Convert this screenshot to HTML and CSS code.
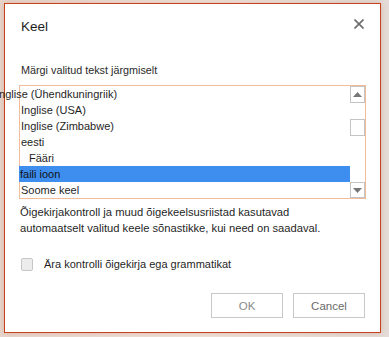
FILE: index.html
```html
<!DOCTYPE html>
<html lang="et">
<head>
<meta charset="utf-8">
<title>Keel</title>
<link rel="stylesheet" href="styles.css">
</head>
<body>
<div class="dialog">
  <div class="header">
    <div class="title">Keel</div>
    <svg class="close" width="10" height="10" viewBox="0 0 10 10"><path d="M0.5 0.5 L9.5 9.5 M9.5 0.5 L0.5 9.5" stroke="#6b6b6b" stroke-width="1.6" fill="none"/></svg>
  </div>
  <div class="label">Märgi valitud tekst järgmiselt</div>
  <div class="list">
    <div class="items">
      <div class="item overflow">Inglise (Ühendkuningriik)</div>
      <div class="item">Inglise (USA)</div>
      <div class="item">Inglise (Zimbabwe)</div>
      <div class="item">eesti</div>
      <div class="item indent">Fääri</div>
      <div class="item selected">faili ioon</div>
      <div class="item">Soome keel</div>
    </div>
    <div class="scrollbar">
      <div class="sbtn up"><svg width="9" height="5" viewBox="0 0 9 5"><path d="M0 5 L4.5 0 L9 5 Z" fill="#777"/></svg></div>
      <div class="thumb"></div>
      <div class="sbtn down"><svg width="9" height="5" viewBox="0 0 9 5"><path d="M0 0 L4.5 5 L9 0 Z" fill="#777"/></svg></div>
    </div>
  </div>
  <p class="desc">Õigekirjakontroll ja muud õigekeelsusriistad kasutavad automaatselt valitud keele sõnastikke, kui need on saadaval.</p>
  <label class="check"><span class="box"></span>Ära kontrolli õigekirja ega grammatikat</label>
  <div class="footer">
    <button class="btn ok">OK</button>
    <button class="btn">Cancel</button>
  </div>
</div>
</body>
</html>
```
FILE: styles.css
```css
html, body {
  margin: 0;
  padding: 0;
}
body {
  width: 389px;
  height: 337px;
  overflow: hidden;
  background: linear-gradient(90deg, #e6d6ce 0%, #efe3dc 50%, #e3dcd8 100%);
  font-family: "Liberation Sans", Arial, sans-serif;
  font-size: 11px;
  color: #262626;
}
.dialog {
  box-sizing: border-box;
  width: 377px;
  height: 330px;
  margin: 3px 0 0 4px;
  background: #fff;
  border: 1px solid #c4421e;
  box-shadow: 0 0 6px rgba(200, 110, 70, 0.35);
  padding: 0 14px 14px 14px;
  display: flex;
  flex-direction: column;
}
.header {
  display: flex;
  justify-content: space-between;
  align-items: flex-start;
  padding-top: 15px;
  height: 40px;
  box-sizing: border-box;
}
.title {
  font-size: 13.5px;
  line-height: 16px;
  padding-left: 2px;
  color: #1e1e1e;
}
.close {
  margin-top: 0px;
  margin-right: 2px;
}
.label {
  margin-top: 18px;
  line-height: 16px;
  padding-left: 2px;
  font-size: 10.8px;
  color: #2a2a2a;
}
.list {
  margin-top: 7px;
  box-sizing: border-box;
  height: 114px;
  border: 1px solid #f0bc9c;
  display: grid;
  grid-template-columns: 1fr 15px;
}
.items {
  display: flex;
  flex-direction: column;
}
.item {
  height: 16px;
  line-height: 16px;
  padding-left: 1px;
  white-space: nowrap;
  color: #1f1f1f;
}
.item.overflow {
  text-indent: -25px;
}
.item.indent {
  padding-left: 9px;
}
.item.selected {
  background: #3e8ef0;
  color: #111;
  margin-left: -1px;
  padding-left: 1px;
}
.scrollbar {
  display: flex;
  flex-direction: column;
}
.sbtn, .thumb {
  box-sizing: border-box;
  width: 15px;
  border: 1px solid #c4c4c4;
  background: #fff;
}
.sbtn {
  height: 17px;
  display: flex;
  align-items: center;
  justify-content: center;
}
.sbtn.down {
  height: 16px;
  margin-top: auto;
}
.thumb {
  height: 17px;
  margin-top: 16px;
}
.desc {
  margin: 6px 0 0 0;
  padding-left: 1px;
  max-width: 305px;
  line-height: 15.5px;
  font-size: 11.2px;
  color: #1f1f1f;
}
.check {
  display: flex;
  align-items: center;
  margin-top: 20px;
  padding-left: 2px;
  line-height: 16px;
  color: #1f1f1f;
}
.box {
  box-sizing: border-box;
  width: 12px;
  height: 13px;
  border: 1px solid #c6c6c6;
  border-radius: 2px;
  background: #ececec;
  margin-right: 11px;
}
.footer {
  margin-top: auto;
  display: flex;
  justify-content: flex-end;
  gap: 10px;
  padding-right: 1px;
}
.btn {
  box-sizing: border-box;
  width: 72px;
  height: 25px;
  border: 1px solid #c8c8c8;
  background: #fff;
  font-family: "Liberation Sans", Arial, sans-serif;
  font-size: 11.5px;
  color: #6a6a6a;
  padding: 0;
}
.btn.ok {
  color: #8a8a8a;
}
```
